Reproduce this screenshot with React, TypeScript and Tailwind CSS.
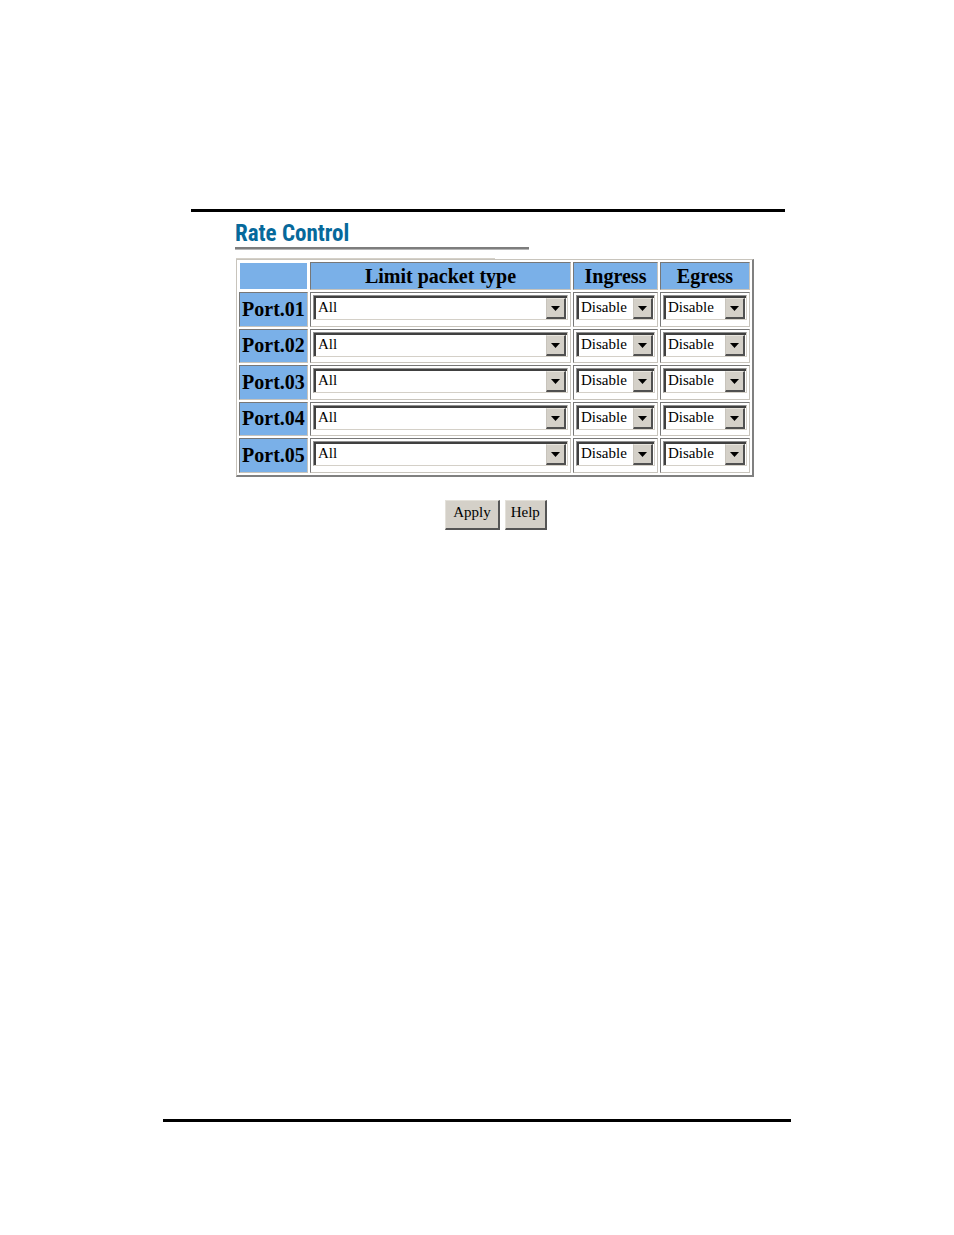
import React from "react";

const ports = ["Port.01", "Port.02", "Port.03", "Port.04", "Port.05"];
const packetTypes = ["All", "Broadcast/Multicast/Flooded Unicast", "Broadcast/Multicast", "Broadcast only"];
const rates = ["Disable", "128kbps", "256kbps", "512kbps", "1Mbps", "2Mbps", "4Mbps", "8Mbps"];

const cellBorder = "border border-t-[#777] border-l-[#777] border-r-[#c8c4bc] border-b-[#c8c4bc]";

function RateSelect({ label, options }: { label: string; options: string[] }) {
  return (
    <div className="relative h-[25px] border border-t-[#909090] border-l-[#909090] border-r-[#d4d0c8] border-b-[#d4d0c8]">
      <select
        aria-label={label}
        className="block h-full w-full appearance-none border-t-2 border-l-2 border-[#404040] bg-white pr-5 pb-1 pl-[2px] text-[15px] leading-[18px] text-black outline-none"
      >
        {options.map((option) => (
          <option key={option}>{option}</option>
        ))}
      </select>
      <span className="pointer-events-none absolute top-[2px] right-px bottom-0 flex w-5 items-center justify-center border-t border-r-2 border-b-2 border-l border-t-[#e8e5de] border-r-[#505050] border-b-[#505050] border-l-[#c8c4bc] bg-[#d4d0c8]">
        <svg width="9" height="5" viewBox="0 0 9 5" aria-hidden="true">
          <path d="M0 0h9L4.5 5z" fill="#000" />
        </svg>
      </span>
    </div>
  );
}

function PushButton({ children }: { children: React.ReactNode }) {
  return (
    <button
      type="button"
      className="h-[30px] border-t border-r-2 border-b-2 border-l border-t-[#e4e1da] border-r-[#555] border-b-[#555] border-l-[#e4e1da] bg-[#d4d0c8] px-[5px] pb-[6px] text-[15px] leading-5 text-black first:px-[7px]"
    >
      {children}
    </button>
  );
}

export default function App() {
  return (
    <div className="flex min-h-screen flex-col bg-white px-4 pt-[209px] pb-[113px] font-['Liberation_Serif',serif] text-black">
      <div className="mx-auto flex w-full max-w-[628px] grow flex-col">
        <hr className="mr-[6px] ml-7 border-t-[3px] border-black" />
        <main className="grow pr-[37px] pl-[73px]">
          <div className="-ml-px">
            <h1 className="mt-2 h-[27px] font-['Roboto_Condensed','Liberation_Sans',sans-serif] text-[23px] leading-7 font-bold whitespace-nowrap text-[#06699b]">
              Rate Control
            </h1>
            <div className="w-[294px] border-t-2 border-b border-t-[#7d7d7d] border-b-[#b5b5b5]" />
          </div>
          <div className="mt-2 h-px w-1/2 bg-[#d4d0c8]" />
          <table className="w-full table-fixed border-separate border-spacing-[2px] border-t border-r-2 border-b-2 border-l border-t-[#c8c4bc] border-r-[#808080] border-b-[#808080] border-l-[#c8c4bc]">
            <colgroup>
              <col className="w-[69px]" />
              <col />
              <col className="w-[85px]" />
              <col className="w-[90px]" />
            </colgroup>
            <thead>
              <tr className="h-7 text-xl leading-6">
                <td className="border border-white bg-[#7ab0e8] p-0" />
                {["Limit packet type", "Ingress", "Egress"].map((title) => (
                  <th key={title} scope="col" className={`${cellBorder} bg-[#7ab0e8] p-0 font-bold`}>
                    {title}
                  </th>
                ))}
              </tr>
            </thead>
            <tbody>
              {ports.map((port) => (
                <tr key={port} className="odd:h-[35px] even:h-[34px]">
                  <th scope="row" className={`${cellBorder} bg-[#7ab0e8] px-0 pt-0 pb-[2px] text-xl leading-6 font-bold`}>
                    {port}
                  </th>
                  <td className={`${cellBorder} p-[2px] align-top`}>
                    <RateSelect label={`${port} limit packet type`} options={packetTypes} />
                  </td>
                  <td className={`${cellBorder} p-[2px] align-top`}>
                    <RateSelect label={`${port} ingress`} options={rates} />
                  </td>
                  <td className={`${cellBorder} p-[2px] align-top`}>
                    <RateSelect label={`${port} egress`} options={rates} />
                  </td>
                </tr>
              ))}
            </tbody>
          </table>
          <div className="mt-[23px] flex justify-center gap-[5px] pl-[2px]">
            <PushButton>Apply</PushButton>
            <PushButton>Help</PushButton>
          </div>
        </main>
        <hr className="border-t-[3px] border-black" />
      </div>
    </div>
  );
}
